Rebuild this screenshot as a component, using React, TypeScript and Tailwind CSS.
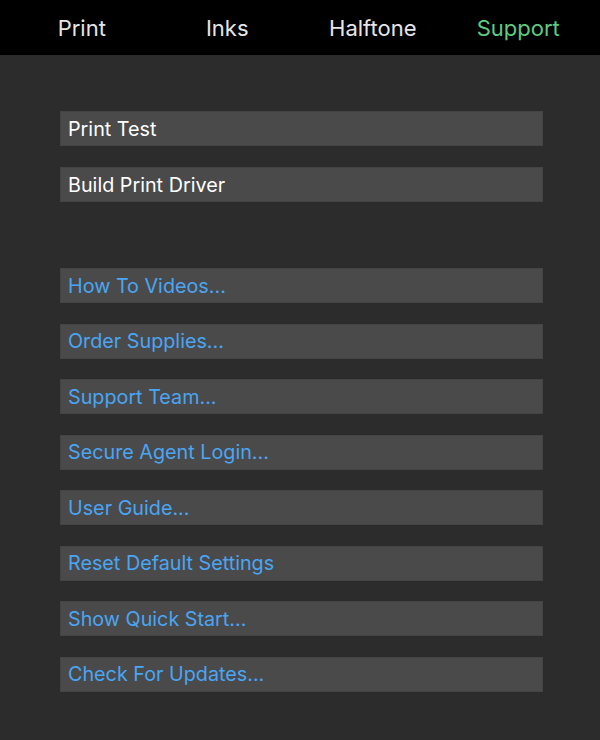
import React from "react";

const white = ["Print Test", "Build Print Driver"];
const blue = [
  "How To Videos...",
  "Order Supplies...",
  "Support Team...",
  "Secure Agent Login...",
  "User Guide...",
  "Reset Default Settings",
  "Show Quick Start...",
  "Check For Updates...",
];

function Btn({ label, color }: { label: string; color: string }) {
  return (
    <div
      className={`h-[35px] w-[483px] bg-[#4a4a4a] border border-[#444444] flex items-center pl-[7px] pt-[2px] text-[19.75px] leading-none ${color}`}
    >
      {label}
    </div>
  );
}

export default function App() {
  return (
    <div
      className="w-[600px] h-[740px] bg-[#2c2c2c] flex flex-col"
      style={{ fontFamily: 'Inter, "Liberation Sans", Arial, sans-serif' }}
    >
      <div className="h-[55px] bg-black grid grid-cols-4 px-[9px] items-center text-[22px] shrink-0 pt-[1px]">
        <div className="text-center text-[#e6e6e6]">Print</div>
        <div className="text-center text-[#e6e6e6]">Inks</div>
        <div className="text-center text-[#e6e6e6]">Halftone</div>
        <div className="text-center text-[#5fcb7e]">Support</div>
      </div>
      <div className="flex flex-col pl-[60px] pt-[56px]">
        <div className="flex flex-col gap-[21px]">
          {white.map((l) => (
            <Btn key={l} label={l} color="text-white" />
          ))}
        </div>
        <div className="flex flex-col gap-[20.5px] mt-[66px]">
          {blue.map((l) => (
            <Btn key={l} label={l} color="text-[#4aa6f4]" />
          ))}
        </div>
      </div>
    </div>
  );
}
